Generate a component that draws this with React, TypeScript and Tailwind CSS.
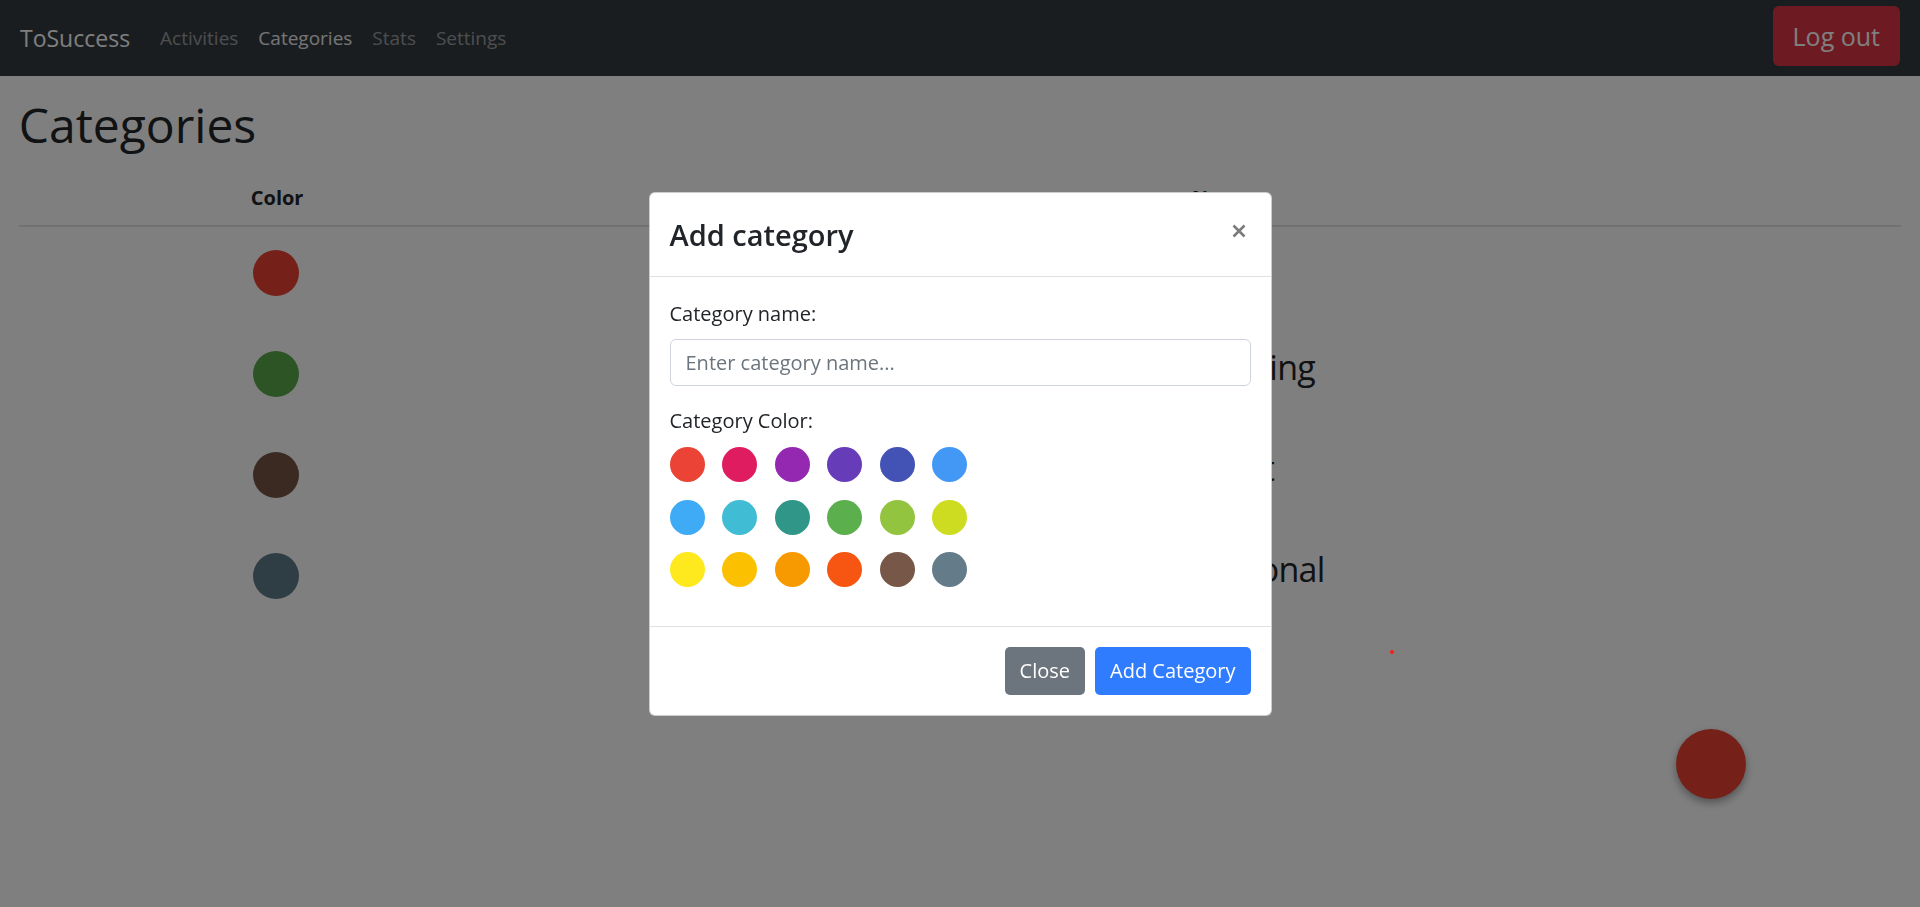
import React from "react";

const swatches = [
  "#eb4335", "#e01c61", "#9528b0", "#663cb8", "#4352b5", "#4398f5",
  "#3fabf6", "#41bcd5", "#309688", "#5baf4c", "#93c440", "#cedc21",
  "#fde91e", "#fbc000", "#f79900", "#f65611", "#765748", "#647c8a",
];

const rows = [
  { color: "#ea4335", name: "Job" },
  { color: "#58a848", name: "Training" },
  { color: "#745444", name: "Sport" },
  { color: "#5e7a8a", name: "Personal" },
];

const links = [
  { label: "Activities", active: false },
  { label: "Categories", active: true },
  { label: "Stats", active: false },
  { label: "Settings", active: false },
];

export default function App() {
  return (
    <div className="relative min-h-[907px] overflow-hidden bg-white font-['Open_Sans','Noto_Sans',sans-serif] text-[#212529]">
      <nav className="flex h-[76px] items-center bg-[#343a40] px-5">
        <span className="mr-5 text-[23px] leading-[37px] text-white">ToSuccess</span>
        <div className="flex">
          {links.map((l) => (
            <a
              key={l.label}
              className={
                l.active
                  ? "px-[10px] text-[19px] leading-[30px] text-white/90"
                  : "px-[10px] text-[19px] leading-[30px] text-white/50"
              }
            >
              {l.label}
            </a>
          ))}
        </div>
        <button className="mb-[4px] ml-auto h-[60px] rounded-[6px] bg-[#dc3545] px-5 text-[25px] leading-[37px] text-white">
          Log out
        </button>
      </nav>

      <main className="px-[18.75px]">
        <h1 className="mb-[10px] mt-[19px] text-[48px] font-medium leading-[60px]">Categories</h1>
        <div className="grid grid-cols-[217px_941px_1fr] border-b-2 border-[#dee2e6]">
          <div />
          <div className="px-[15px] pb-[12px] pt-[18px] text-[20px] font-bold leading-[30px]">Color</div>
          <div className="px-[15px] pb-[12px] pt-[18px] text-[20px] font-bold leading-[30px]">Name</div>
        </div>
        {rows.map((r) => (
          <div key={r.name} className="grid h-[101px] grid-cols-[217px_941px_1fr]">
            <div />
            <div className="pl-[17px] pt-[23px]">
              <div className="h-[46px] w-[46px] rounded-full" style={{ backgroundColor: r.color }} />
            </div>
            <div className="pl-[15px] pt-[18px] text-[34px] font-medium leading-[42px] tracking-[-0.02em]">{r.name}</div>
          </div>
        ))}
      </main>

      <div className="fixed bottom-[108px] right-[174px] h-[70px] w-[70px] rounded-full bg-[#ea4335] shadow-[0_4px_8px_rgba(0,0,0,0.35)]" />

      <div className="fixed inset-0 bg-black/50" />

      <div className="fixed inset-0 flex items-center justify-center">
        <div className="w-[623px] rounded-[6px] border border-black/20 bg-white">
          <div className="flex items-start justify-between border-b border-[#dee2e6] px-5 py-[19px]">
            <h4 className="text-[29px] font-semibold leading-[45px]">Add category</h4>
            <button className="mr-[5px] mt-[12px] flex h-[14px] w-[14px] items-center justify-center">
              <svg width="14" height="14" viewBox="0 0 14 14">
                <path d="M1.5 1.5 L12.5 12.5 M12.5 1.5 L1.5 12.5" stroke="#7b7b7b" strokeWidth="2.6" strokeLinecap="butt" />
              </svg>
            </button>
          </div>
          <div className="p-5">
            <label className="mb-[10px] block pt-[2px] text-[20px] leading-[30px]">Category name:</label>
            <input
              className="mb-5 block h-[47.5px] w-full rounded-[6px] border border-[#ced4da] px-[15px] text-[20px] leading-[30px] outline-none placeholder:text-[#6c757d]"
              placeholder="Enter category name..."
            />
            <label className="mb-[11px] block text-[20px] leading-[30px]">Category Color:</label>
            <div className="grid w-max grid-cols-[repeat(6,35px)] gap-[17.5px] pb-[19px]">
              {swatches.map((c) => (
                <div key={c} className="h-[35px] w-[35px] rounded-full" style={{ backgroundColor: c }} />
              ))}
            </div>
          </div>
          <div className="flex justify-end gap-[10px] border-t border-[#dee2e6] p-5">
            <button className="h-[47.5px] rounded-[5px] bg-[#6c757d] px-[15px] text-[20px] leading-[30px] text-white">
              Close
            </button>
            <button className="h-[47.5px] rounded-[5px] bg-[#307cff] px-[15px] text-[20px] leading-[30px] text-white">
              Add Category
            </button>
          </div>
        </div>
      </div>

      <div className="fixed left-[1390px] top-[650px] h-[4px] w-[4px] rounded-full bg-[#ff1a1a]" />
    </div>
  );
}
